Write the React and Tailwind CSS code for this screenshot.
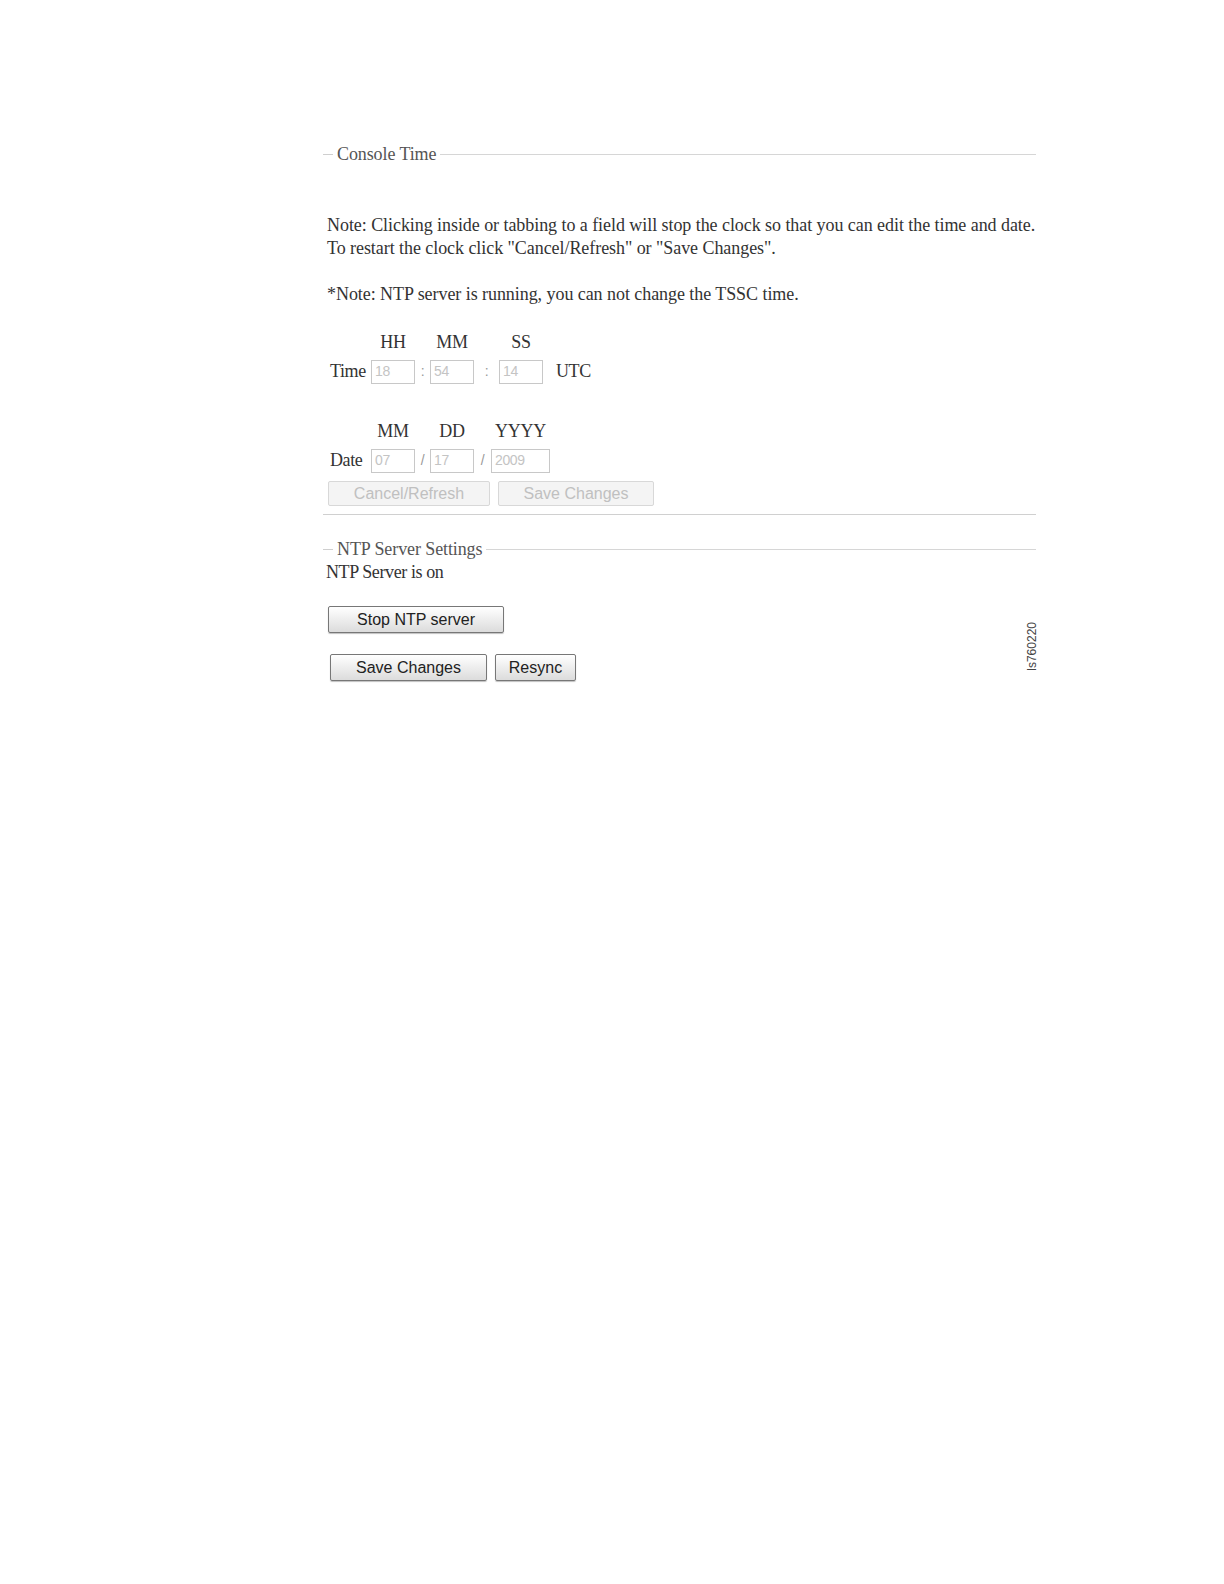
import React from 'react';

const serif = "font-['Liberation_Serif','Times_New_Roman',serif]";
const sans = "font-['Liberation_Sans',Arial,sans-serif]";

const Legend = ({ children, className = '' }) => (
  <div className={`flex items-center ${className}`}>
    <div className="w-[10px] h-px bg-[#cfcfcf]" />
    <span className="px-[4px] text-[18px] leading-[20px] text-[#555] tracking-[-0.1px]">{children}</span>
    <div className="flex-1 h-px bg-[#d6d6d6]" />
  </div>
);

const Field = ({ value, w = 'w-[44px]' }) => (
  <div className={`${w} h-[24px] border border-[#c8c8c8] bg-white px-[3px] flex items-center ${sans} text-[14px] text-[#c4c4c4]`}>
    {value}
  </div>
);

const Sep = ({ children, w = 'w-[15px]' }) => (
  <span className={`${w} text-center ${sans} text-[14px] text-[#999]`}>{children}</span>
);

const Head = ({ children, w = 'w-[44px]' }) => (
  <span className={`${w} text-center`}>{children}</span>
);

const Btn = ({ children, w, disabled }) => (
  <button
    className={`${w} ${sans} text-[16px] rounded-[2px] border ${
      disabled
        ? 'h-[25px] border-[#d8d8d8] bg-[#f4f4f4] text-[#c0c0c0]'
        : 'h-[27px] border-[#777] bg-gradient-to-b from-white to-[#dcdcdc] text-[#222] shadow-[0_1px_1px_rgba(0,0,0,0.25)]'
    }`}
  >
    {children}
  </button>
);

export default function App() {
  return (
    <div className={`w-full h-screen overflow-hidden bg-white ${serif} text-[#333]`}>
      <div className="ml-[323px] w-[713px] pt-[144px]">
        <Legend>Console Time</Legend>

        <div className="mt-[50px] pl-[4px] text-[18px] leading-[23px] tracking-[-0.06px]">
          <p>Note: Clicking inside or tabbing to a field will stop the clock so that you can edit the time and date.</p>
          <p>To restart the clock click "Cancel/Refresh" or "Save Changes".</p>
          <p className="mt-[23px]">*Note: NTP server is running, you can not change the TSSC time.</p>
        </div>

        <div className="mt-[26px] pl-[48px] flex text-[18px] leading-[20px] tracking-[-0.3px]">
          <Head>HH</Head>
          <Sep />
          <Head>MM</Head>
          <Sep w="w-[25px]" />
          <Head>SS</Head>
        </div>
        <div className="mt-[6px] pl-[7px] flex items-center text-[18px] tracking-[-0.4px]">
          <span className="w-[41px]">Time</span>
          <Field value="18" />
          <Sep>:</Sep>
          <Field value="54" />
          <Sep w="w-[25px]">:</Sep>
          <Field value="14" />
          <span className="ml-[13px]">UTC</span>
        </div>

        <div className="mt-[36px] pl-[48px] flex text-[18px] leading-[20px] tracking-[-0.3px]">
          <Head>MM</Head>
          <Sep />
          <Head>DD</Head>
          <Sep w="w-[17px]" />
          <Head w="w-[59px]">YYYY</Head>
        </div>
        <div className="mt-[6px] pl-[7px] flex items-center text-[18px] tracking-[-0.4px]">
          <span className="w-[41px]">Date</span>
          <Field value="07" />
          <Sep>/</Sep>
          <Field value="17" />
          <Sep w="w-[17px]">/</Sep>
          <Field value="2009" w="w-[59px]" />
        </div>

        <div className="mt-[7px] pl-[5px] flex gap-[8px]">
          <Btn w="w-[162px]" disabled>Cancel/Refresh</Btn>
          <Btn w="w-[156px]" disabled>Save Changes</Btn>
        </div>

        <div className="mt-[8px] h-px bg-[#d0d0d0]" />

        <Legend className="mt-[24px]">NTP Server Settings</Legend>

        <div className="flex">
          <div className="flex-1">
            <p className="mt-[2px] pl-[3px] text-[18px] leading-[23px] tracking-[-0.4px]">NTP Server is on</p>
            <div className="mt-[22px] pl-[5px]">
              <Btn w="w-[176px]">Stop NTP server</Btn>
            </div>
            <div className="mt-[21px] pl-[7px] flex gap-[8px]">
              <Btn w="w-[157px]">Save Changes</Btn>
              <Btn w="w-[81px]">Resync</Btn>
            </div>
          </div>
          <div className="w-[16px] mr-[-3px] flex items-end pb-[10px]">
            <span className={`${sans} text-[12px] text-[#444] [writing-mode:vertical-rl] rotate-180`}>ls760220</span>
          </div>
        </div>
      </div>
    </div>
  );
}
